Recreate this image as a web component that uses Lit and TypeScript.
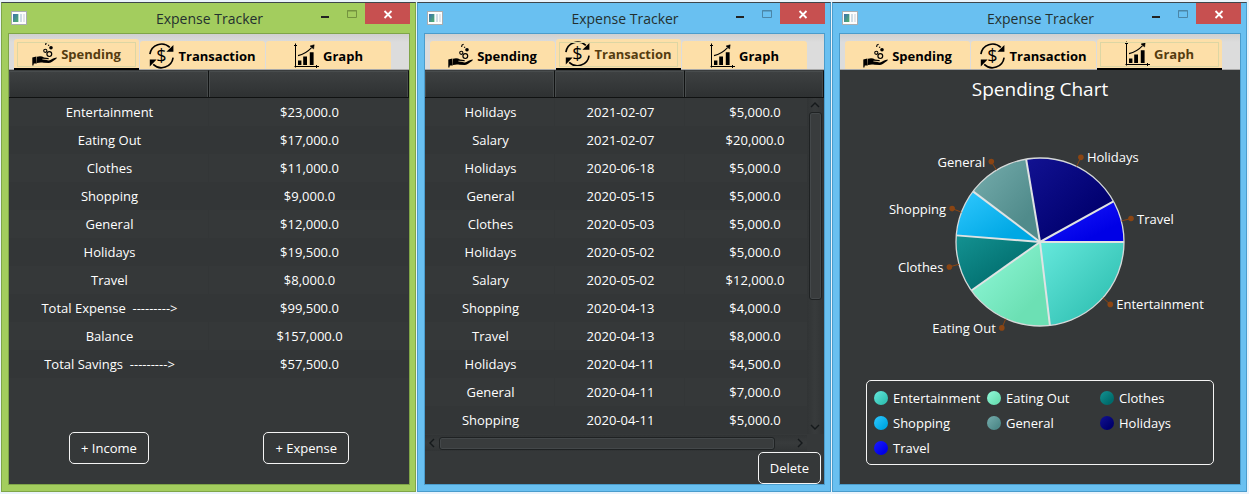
import { LitElement, html, svg, css, nothing } from "lit";
import { customElement, property } from "lit/decorators.js";
import { classMap } from "lit/directives/class-map.js";

type TabName = "Spending" | "Transaction" | "Graph";

const TABS: TabName[] = ["Spending", "Transaction", "Graph"];

const TOTALS: string[][] = [
  ["Entertainment", "$23,000.0"],
  ["Eating Out", "$17,000.0"],
  ["Clothes", "$11,000.0"],
  ["Shopping", "$9,000.0"],
  ["General", "$12,000.0"],
  ["Holidays", "$19,500.0"],
  ["Travel", "$8,000.0"],
  ["Total Expense  --------->", "$99,500.0"],
  ["Balance", "$157,000.0"],
  ["Total Savings  --------->", "$57,500.0"],
];

const TRANSACTIONS: string[][] = [
  ["Holidays", "2021-02-07", "$5,000.0"],
  ["Salary", "2021-02-07", "$20,000.0"],
  ["Holidays", "2020-06-18", "$5,000.0"],
  ["General", "2020-05-15", "$5,000.0"],
  ["Clothes", "2020-05-03", "$5,000.0"],
  ["Holidays", "2020-05-02", "$5,000.0"],
  ["Salary", "2020-05-02", "$12,000.0"],
  ["Shopping", "2020-04-13", "$4,000.0"],
  ["Travel", "2020-04-13", "$8,000.0"],
  ["Holidays", "2020-04-11", "$4,500.0"],
  ["General", "2020-04-11", "$7,000.0"],
  ["Shopping", "2020-04-11", "$5,000.0"],
];

interface Slice {
  name: string;
  value: number;
  light: string;
  dark: string;
}

const SLICES: Slice[] = [
  { name: "Entertainment", value: 23000, light: "#66e8dc", dark: "#35c4b6" },
  { name: "Eating Out", value: 17000, light: "#92fadb", dark: "#6ce0b4" },
  { name: "Clothes", value: 11000, light: "#149292", dark: "#006c6c" },
  { name: "Shopping", value: 9000, light: "#30c8ff", dark: "#00a8e4" },
  { name: "General", value: 12000, light: "#76adad", dark: "#508b8b" },
  { name: "Holidays", value: 19500, light: "#121292", dark: "#00006e" },
  { name: "Travel", value: 8000, light: "#1c1cff", dark: "#0000e6" },
];

const spendingIcon = svg`
  <path d="M0.3 16.6 L4.4 15.4 L4.8 22.6 L1.8 22.4 L1.4 24.6 L0.3 24.6 Z" fill="#000"/>
  <path d="M5 15.8 C7.4 14.8 10 15 12 16.4 L16 17 C17.2 17.4 17 18.4 16 18.6 L11.6 18.6 L17 19.4 C19.4 18.4 21.6 16.8 24.6 16.4 C25.2 16.8 24.8 17.4 24 18 C21.4 19.8 19.6 21.8 17 22 L11.6 21.8 C9.4 21.2 7.4 21.4 5 22 Z" fill="#000"/>
  <path d="M10.4 18.2 L16.4 18.6" stroke="#fddfa8" stroke-width="0.7"/>
  <circle cx="13.3" cy="9.8" r="1.6" fill="none" stroke="#000" stroke-width="1.1"/>
  <circle cx="17.3" cy="13.1" r="2.4" fill="none" stroke="#000" stroke-width="1.2"/>
  <circle cx="19" cy="6.8" r="1.8" fill="#000"/>
  <path d="M13.6 4 L14 2 L15.6 1.2 M16 4.4 L17.2 4" fill="none" stroke="#000" stroke-width="1.1"/>`;

const transactionIcon = svg`
  <path d="M0.9 11.2 A11.8 11.8 0 0 1 20.8 4.4" fill="none" stroke="#000" stroke-width="1.6"/>
  <path d="M24.1 14.6 A11.8 11.8 0 0 1 4.2 21.4" fill="none" stroke="#000" stroke-width="1.6"/>
  <path d="M24.4 2 L24.4 8.8 L17.4 8.8 Z M0.8 23.4 L0.8 16.6 L7.6 16.6 Z" fill="#000"/>
  <text x="12.5" y="19" text-anchor="middle" font-family="Open Sans, sans-serif" font-size="18" font-weight="500">$</text>`;

const graphIcon = svg`
  <path d="M1.5 0.5 V24.5 M0 2.5 H3 M0.5 23.5 H25 M22.5 22 V25" fill="none" stroke="#000"/>
  <path d="M4 17.5 H7.4 V22 H4 Z M9.2 13.5 H13 V22 H9.2 Z M15.8 9.2 H19.6 V22 H15.8 Z" fill="#000"/>
  <path d="M4 12.6 C9.5 11.4 13.5 9 17.6 4.6" fill="none" stroke="#000" stroke-width="1.1"/>
  <path d="M16 3 L20.2 1.8 L19.6 6 Z" fill="#000" stroke="#000" stroke-width="0.5"/>`;

const ICONS = {
  Spending: spendingIcon,
  Transaction: transactionIcon,
  Graph: graphIcon,
};

@customElement("pie-chart")
export class PieChart extends LitElement {
  static styles = css`
    :host {
      display: block;
    }
    .pie {
      display: block;
      width: 330px;
      height: 190px;
      margin: 0 auto;
      overflow: visible;
    }
    .label {
      fill: #fff;
      font: 13px "Open Sans", "Noto Sans", sans-serif;
    }
    .lead {
      stroke: #8b4513;
      stroke-width: 1;
    }
    .dot {
      fill: #8b4513;
    }
    .spoke {
      stroke: #dfe3e3;
      stroke-width: 2;
    }
    .rim {
      fill: none;
      stroke: #d5d9d9;
      stroke-width: 1.3;
    }
  `;

  render() {
    const radius = 84;
    const total = SLICES.reduce((sum, s) => sum + s.value, 0);
    const at = (angle: number, r: number) => [Math.cos(angle) * r, Math.sin(angle) * r];
    let angle = 0;
    const parts = SLICES.map((s) => {
      const start = angle;
      angle += (s.value / total) * Math.PI * 2;
      return { ...s, start, end: angle, mid: (start + angle) / 2 };
    });
    return html`
      <svg class="pie" viewBox="-165 -95 330 190" role="img" aria-label="Spending Chart">
        <defs>
          ${parts.map(
            (p, i) => svg`
              <linearGradient id="g${i}" x1="0" y1="0" x2="1" y2="1">
                <stop offset="0" stop-color=${p.light}></stop>
                <stop offset="0.75" stop-color=${p.dark}></stop>
              </linearGradient>`
          )}
        </defs>
        ${parts.map((p, i) => {
          const [x1, y1] = at(p.start, radius);
          const [x2, y2] = at(p.end, radius);
          return svg`<path d="M0 0 L${x1} ${y1} A${radius} ${radius} 0 0 1 ${x2} ${y2} Z" fill="url(#g${i})"></path>`;
        })}
        ${parts.map((p) => {
          const [x, y] = at(p.start, radius);
          return svg`<line class="spoke" x1="0" y1="0" x2=${x} y2=${y}></line>`;
        })}
        <circle class="rim" r=${radius}></circle>
        ${parts.map((p) => {
          const [x1, y1] = at(p.mid, radius);
          const [x2, y2] = at(p.mid, radius + 10);
          const right = x2 > 0;
          return svg`
            <line class="lead" x1=${x1} y1=${y1} x2=${x2} y2=${y2}></line>
            <circle class="dot" cx=${x2} cy=${y2} r="2.8"></circle>
            <text class="label" x=${x2 + (right ? 6 : -6)} y=${y2 + 5}
              text-anchor=${right ? "start" : "end"}>${p.name}</text>`;
        })}
      </svg>
    `;
  }
}

@customElement("tracker-window")
export class TrackerWindow extends LitElement {
  @property() tab: TabName = "Spending";

  static styles = css`
    :host {
      --accent: #69c0f1;
      --edge: #4a9ccc;
      --muted: #4b86a8;
      display: flex;
      flex-direction: column;
      box-sizing: border-box;
      min-width: 0;
      padding: 0 6px 7px 7px;
      border: 1px solid var(--edge);
      border-top: 1px solid #3d464c;
      background: var(--accent);
      color: #fff;
      font: 13px/18px "Open Sans", "Noto Sans", sans-serif;
    }
    :host([green]) {
      --accent: #a3cd5e;
      --edge: #7fa548;
      --muted: #74933f;
    }
    button {
      margin: 0;
      padding: 0;
      border: 0;
      background: none;
      color: inherit;
      font: inherit;
      cursor: pointer;
    }

    .titlebar {
      display: grid;
      grid-template-columns: 1fr auto 1fr;
      height: 30px;
      margin-right: -1px;
    }
    .appicon {
      display: block;
      width: 16px;
      height: 14px;
      margin: 8px 0 0 2px;
    }
    .title {
      margin: 0;
      color: #24302f;
      font-size: 14px;
      font-weight: 400;
      line-height: 31px;
      white-space: nowrap;
    }
    .controls {
      display: flex;
      justify-content: flex-end;
      align-items: flex-start;
    }
    .control {
      display: block;
      width: 27px;
      height: 21px;
    }
    .control svg {
      display: block;
      width: 100%;
      height: 21px;
    }
    .close {
      width: 45px;
      background: #c75050;
    }

    .content {
      display: flex;
      flex-direction: column;
      flex: 1;
      border: 1px solid var(--edge);
      margin: 0 -1px -1px;
      background: #353839;
    }
    .tabs {
      display: flex;
      align-items: flex-end;
      gap: 1px;
      height: 36px;
      box-sizing: border-box;
      padding-left: 5px;
      background: linear-gradient(#d0d0d0, #dcdcdc 8px);
      border-bottom: 1px solid #a8a8a8;
    }
    .tab {
      display: flex;
      align-items: center;
      justify-content: center;
      gap: 4px;
      box-sizing: border-box;
      width: 125px;
      height: 28px;
      padding-top: 2px;
      border-radius: 3px 3px 0 0;
      background: #fddfa8;
      color: #000;
      font-weight: 700;
    }
    .tab.selected {
      height: 31px;
      margin-bottom: -1px;
      padding: 1px 2px;
      border-bottom: 2px solid #000;
      color: #553c10;
      outline: 1px solid #dcd6a4;
      outline-offset: -4px;
    }
    .tabicon {
      width: 25px;
      height: 26px;
      flex: none;
    }

    .grid {
      width: 100%;
      border-collapse: separate;
      border-spacing: 0;
      table-layout: fixed;
    }
    .grid th {
      height: 28px;
      padding: 0;
      box-sizing: border-box;
      background: linear-gradient(#3e4142, #2e3132);
      border: 1px solid #101212;
      border-left: 0;
      border-top-color: #3a3d3e;
      box-shadow: inset 1px 1px #484c4d, inset -1px 0 #45494a;
    }
    .grid td {
      height: 28px;
      box-sizing: border-box;
      padding: 0 0 0 2px;
      text-align: center;
      white-space: pre;
      border-right: 1px solid #333637;
    }
    .grid tbody tr:nth-child(even) {
      background: #333637;
    }
    .date {
      width: 130px;
    }

    .actions {
      display: flex;
      justify-content: space-between;
      margin-top: auto;
      padding: 0 60px 20px;
    }
    .actions.end {
      justify-content: flex-end;
      padding: 0 3px 0 0;
    }
    .action {
      height: 32px;
      padding: 0 11px;
      border: 1px solid #f4f4f4;
      border-radius: 5px;
    }

    .scroller {
      position: relative;
    }
    .vbar {
      position: absolute;
      top: 28px;
      right: 1px;
      bottom: 0;
      display: flex;
      flex-direction: column;
      justify-content: space-between;
      width: 16px;
      background: linear-gradient(90deg, #313435, #383b3c, #313435);
    }
    .hbar {
      display: flex;
      align-items: center;
      justify-content: space-between;
      height: 16px;
      margin-top: 1px;
      margin-right: 17px;
      background: linear-gradient(#313435, #383b3c, #313435);
    }
    .arrow {
      display: block;
      width: 14px;
      height: 14px;
      flex: none;
      margin: auto;
      fill: none;
      stroke: #15191b;
      stroke-width: 1.4;
    }
    .track {
      display: flex;
      flex: 1;
    }
    .vbar .track {
      flex-direction: column;
      align-items: center;
    }
    .thumb {
      box-sizing: border-box;
      border: 1px solid #1f2223;
      border-radius: 3px;
      box-shadow: inset 0 0 0 1px #44484a;
      background: #393c3d;
    }
    .vbar .thumb {
      width: 13px;
      height: 61%;
    }
    .hbar .thumb {
      width: 95%;
      height: 13px;
    }

    .chart-title {
      margin: 0;
      font-size: 19px;
      font-weight: 400;
      line-height: 38px;
      text-align: center;
    }
    .chart {
      display: block;
      margin-top: 39px;
    }
    .legend {
      display: grid;
      grid-template-columns: repeat(3, 113px);
      grid-auto-rows: 25px;
      align-items: center;
      align-self: center;
      margin: auto 0 19px;
      padding: 4px 0 4px 7px;
      border: 1px solid #f4f4f4;
      border-radius: 5px;
      list-style: none;
    }
    .legend li {
      display: flex;
      align-items: center;
      gap: 5px;
      white-space: nowrap;
    }
    .swatch {
      width: 14px;
      height: 14px;
      border-radius: 50%;
      flex: none;
    }
  `;

  private renderTable(label: string, rows: string[][], widths: string[]) {
    return html`
      <table class="grid" aria-label=${label}>
        <colgroup>
          ${widths.map((w) => html`<col class=${w || nothing} />`)}
        </colgroup>
        <thead>
          <tr>
            ${widths.map(() => html`<th scope="col"></th>`)}
          </tr>
        </thead>
        <tbody>
          ${rows.map(
            (row) => html`<tr>${row.map((cell) => html`<td>${cell}</td>`)}</tr>`
          )}
        </tbody>
      </table>
    `;
  }

  private renderSpending() {
    return html`
      ${this.renderTable("Spending", TOTALS, ["", ""])}
      <div class="actions">
        <button class="action" type="button">+ Income</button>
        <button class="action" type="button">+ Expense</button>
      </div>
    `;
  }

  private renderTransactions() {
    return html`
      <div class="scroller">
        ${this.renderTable("Transactions", TRANSACTIONS, ["date", "date", ""])}
        <div class="vbar" aria-hidden="true">
          <svg class="arrow" viewBox="0 0 14 14"><path d="M3 9 L7 5 L11 9" /></svg>
          <div class="track"><div class="thumb"></div></div>
          <svg class="arrow" viewBox="0 0 14 14"><path d="M3 5 L7 9 L11 5" /></svg>
        </div>
      </div>
      <div class="hbar" aria-hidden="true">
        <svg class="arrow" viewBox="0 0 14 14"><path d="M9 3 L5 7 L9 11" /></svg>
        <div class="track"><div class="thumb"></div></div>
        <svg class="arrow" viewBox="0 0 14 14"><path d="M5 3 L9 7 L5 11" /></svg>
      </div>
      <div class="actions end">
        <button class="action" type="button">Delete</button>
      </div>
    `;
  }

  private renderGraph() {
    return html`
      <h2 class="chart-title">Spending Chart</h2>
      <pie-chart class="chart"></pie-chart>
      <ul class="legend">
        ${SLICES.map(
          (s) => html`
            <li>
              <span
                class="swatch"
                style="background: linear-gradient(135deg, ${s.light}, ${s.dark} 75%)"
              ></span>
              ${s.name}
            </li>
          `
        )}
      </ul>
    `;
  }

  private renderBody() {
    if (this.tab === "Spending") return this.renderSpending();
    if (this.tab === "Transaction") return this.renderTransactions();
    return this.renderGraph();
  }

  render() {
    return html`
      <header class="titlebar">
        <svg class="appicon" viewBox="0 0 16 14" aria-hidden="true">
          <defs>
            <linearGradient id="pane" x1="0" y1="0" x2="1" y2="1">
              <stop offset="0" stop-color="#3c6fb4"></stop>
              <stop offset="1" stop-color="#4fb06a"></stop>
            </linearGradient>
          </defs>
          <rect x="0.5" y="0.5" width="15" height="13" fill="#fdfdfd" stroke="#a9adb0"></rect>
          <rect x="2" y="3" width="5" height="8" fill="url(#pane)"></rect>
          <rect x="7" y="3" width="1" height="8" fill="#b9dcd0"></rect>
          <rect x="9" y="3" width="2" height="8" fill="#cfdde6"></rect>
          <rect x="12" y="3" width="2" height="8" fill="#e2e6ea"></rect>
        </svg>
        <h1 class="title">Expense Tracker</h1>
        <div class="controls">
          <button class="control" type="button" aria-label="Minimize">
            <svg viewBox="0 0 27 21"><rect x="10" y="13" width="8" height="2" fill="#222"></rect></svg>
          </button>
          <button class="control" type="button" aria-label="Maximize">
            <svg viewBox="0 0 27 21">
              <path d="M9.5 7.5 H18.5 V14.5 H9.5 Z M9 8 H19" fill="none" stroke="var(--muted)"></path>
            </svg>
          </button>
          <button class="control close" type="button" aria-label="Close">
            <svg viewBox="0 0 45 21">
              <path d="M19.5 8 L26.5 15 M26.5 8 L19.5 15" stroke="#fff" stroke-width="1.8"></path>
            </svg>
          </button>
        </div>
      </header>
      <main class="content">
        <div class="tabs" role="tablist">
          ${TABS.map(
            (name) => html`
              <button
                type="button"
                role="tab"
                aria-selected=${name === this.tab ? "true" : "false"}
                class=${classMap({ tab: true, selected: name === this.tab })}
              >
                <svg class="tabicon" viewBox="0 0 25 26" aria-hidden="true">${ICONS[name]}</svg>
                ${name}
              </button>
            `
          )}
        </div>
        ${this.renderBody()}
      </main>
    `;
  }
}

@customElement("app-root")
export class AppRoot extends LitElement {
  static styles = css`
    :host {
      display: grid;
      grid-template-columns: 415fr 414fr 415fr;
      gap: 1px;
      box-sizing: border-box;
      min-height: 100vh;
      padding: 2px 2px 2px 1px;
      background: #eaf3fb;
    }
  `;

  render() {
    return html`
      <tracker-window green tab="Spending"></tracker-window>
      <tracker-window tab="Transaction"></tracker-window>
      <tracker-window tab="Graph"></tracker-window>
    `;
  }
}
